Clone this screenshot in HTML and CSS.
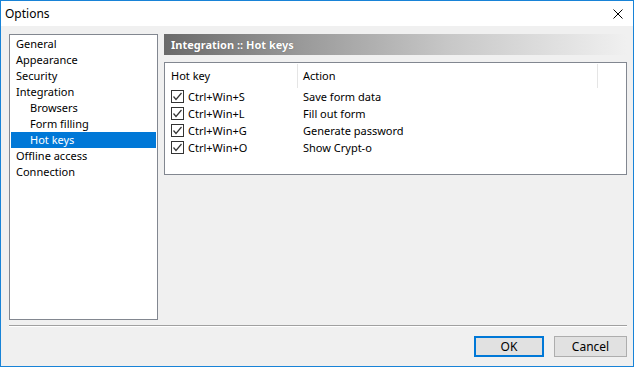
FILE: index.html
```html
<!DOCTYPE html>
<html>
<head>
<meta charset="utf-8">
<link rel="stylesheet" href="styles.css">
</head>
<body>
<div class="window">
  <div class="titlebar">
    <span class="title">Options</span>
    <svg class="close" width="10" height="10" viewBox="0 0 10 10"><path d="M0.5 0.5L9.5 9.5M9.5 0.5L0.5 9.5" stroke="#000" stroke-width="1" fill="none"/></svg>
  </div>
  <div class="client">
    <div class="main">
      <ul class="tree">
        <li class="node">General</li>
        <li class="node">Appearance</li>
        <li class="node">Security</li>
        <li class="node">Integration</li>
        <li class="node child">Browsers</li>
        <li class="node child">Form filling</li>
        <li class="node child selected">Hot keys</li>
        <li class="node">Offline access</li>
        <li class="node">Connection</li>
      </ul>
      <div class="panel">
        <div class="panel-header">Integration :: Hot keys</div>
        <div class="listview">
          <div class="lv-head">
            <div class="col c1">Hot key</div>
            <div class="col c2">Action</div>
            <div class="col c3"></div>
          </div>
          <div class="lv-row"><span class="check"><svg width="11" height="11" viewBox="0 0 11 11"><path d="M1.5 5.5L4 8.5L9.5 2" stroke="#333" stroke-width="1.2" fill="none"/></svg></span><span class="key">Ctrl+Win+S</span><span class="act">Save form data</span></div>
          <div class="lv-row"><span class="check"><svg width="11" height="11" viewBox="0 0 11 11"><path d="M1.5 5.5L4 8.5L9.5 2" stroke="#333" stroke-width="1.2" fill="none"/></svg></span><span class="key">Ctrl+Win+L</span><span class="act">Fill out form</span></div>
          <div class="lv-row"><span class="check"><svg width="11" height="11" viewBox="0 0 11 11"><path d="M1.5 5.5L4 8.5L9.5 2" stroke="#333" stroke-width="1.2" fill="none"/></svg></span><span class="key">Ctrl+Win+G</span><span class="act">Generate password</span></div>
          <div class="lv-row"><span class="check"><svg width="11" height="11" viewBox="0 0 11 11"><path d="M1.5 5.5L4 8.5L9.5 2" stroke="#333" stroke-width="1.2" fill="none"/></svg></span><span class="key">Ctrl+Win+O</span><span class="act">Show Crypt-o</span></div>
        </div>
      </div>
    </div>
    <div class="sep"></div>
    <div class="buttons">
      <button class="btn default">OK</button>
      <button class="btn">Cancel</button>
    </div>
  </div>
</div>
</body>
</html>
```

FILE: styles.css
```css
* { box-sizing: border-box; }
html, body { margin: 0; padding: 0; }
body {
  font-family: "Noto Sans", "Open Sans", sans-serif;
  font-size: 11px;
  color: #000;
  background: #f0f0f0;
}
.window {
  width: 634px;
  height: 367px;
  border: 1px solid #1883d7;
  display: flex;
  flex-direction: column;
  background: #f0f0f0;
}
.titlebar {
  height: 25px;
  background: #fff;
  display: flex;
  align-items: center;
  justify-content: space-between;
  padding: 0 10px 0 4px;
  flex: none;
}
.title { font-size: 12px; }
.close { display: block; }
.client {
  flex: 1;
  display: flex;
  flex-direction: column;
  padding: 8px 6px 9px 8px;
}
.main {
  display: flex;
  gap: 6px;
  height: 286px;
}
.tree {
  list-style: none;
  margin: 0;
  padding: 1px 1px;
  width: 149px;
  height: 286px;
  background: #fff;
  border: 1px solid #828790;
  flex: none;
}
.node {
  height: 16px;
  line-height: 16px;
  padding-left: 5px;
  white-space: nowrap;
}
.node.child { padding-left: 19px; }
.node.selected { background: #0078d7; color: #fff; }
.panel {
  flex: 1;
  display: flex;
  flex-direction: column;
  gap: 7px;
}
.panel-header {
  height: 21px;
  line-height: 21px;
  padding-left: 7px;
  color: #fff;
  font-weight: bold;
  background: linear-gradient(to right, #6a6a6a 0%, #9a9a9a 30%, #c8c8c8 62%, #f0f0f0 100%);
  text-shadow: 0 0 1px #555;
}
.listview {
  height: 113px;
  background: #fff;
  border: 1px solid #828790;
}
.lv-head {
  display: flex;
  height: 25px;
  align-items: stretch;
}
.col {
  line-height: 24px;
  padding-left: 6px;
  border-right: 1px solid #e5e5e5;
  margin: 1px 0 0 0;
}
.c1 { width: 133px; }
.c2 { width: 300px; padding-left: 5px; }
.c3 { border-right: none; }
.lv-row {
  display: flex;
  align-items: center;
  height: 17px;
  padding-left: 6px;
}
.check {
  width: 13px;
  height: 13px;
  border: 1px solid #333;
  display: flex;
  align-items: center;
  justify-content: center;
  flex: none;
}
.check svg { display: block; }
.key { width: 119px; padding-left: 4px; }
.sep {
  height: 2px;
  border-top: 1px solid #a0a0a0;
  border-bottom: 1px solid #fff;
  margin-top: 5px;
}
.buttons {
  display: flex;
  justify-content: flex-end;
  gap: 10px;
  margin-top: 9px;
}
.btn {
  font-family: inherit;
  font-size: 12px;
  height: 21px;
  background: #e1e1e1;
  border: 1px solid #adadad;
  padding: 0;
  color: #000;
  width: 73px;
}
.btn.default { border: 2px solid #0078d7; width: 70px; }
```
